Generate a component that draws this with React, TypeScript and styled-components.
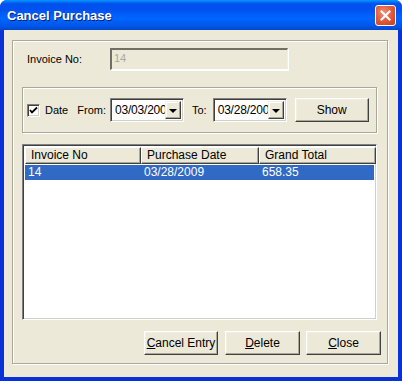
import React from "react";
import styled, { createGlobalStyle } from "styled-components";

const Global = createGlobalStyle`
  html, body { margin: 0; padding: 0; background: #fff; }
  body { font-family: "Liberation Sans", Arial, sans-serif; font-size: 11px; color: #000; }
`;

const Window = styled.div`
  width: 402px;
  height: 381px;
  display: flex;
  flex-direction: column;
  background: #0831d9;
  border-radius: 7px 7px 0 0;
  overflow: hidden;
  box-sizing: border-box;
`;

const TitleBar = styled.div`
  height: 30px;
  flex: none;
  display: flex;
  align-items: center;
  justify-content: space-between;
  padding: 0 6px 0 7px;
  background: linear-gradient(180deg, #0997ff 0%, #0053ee 12%, #0050ee 30%, #06f 60%, #0055e8 88%, #0046c8 100%);
`;

const Title = styled.span`
  color: #fff;
  font-family: "Liberation Sans", Arial, sans-serif;
  font-weight: bold;
  font-size: 13px;
  text-shadow: 1px 1px 0 #0a1e80;
`;

const CloseBtn = styled.div`
  width: 21px;
  height: 21px;
  box-sizing: border-box;
  border: 1px solid #fff;
  border-radius: 3px;
  background: radial-gradient(circle at 40% 35%, #f0907a 0%, #e25a3a 50%, #c3401f 100%);
  display: flex;
  align-items: center;
  justify-content: center;
`;

const Client = styled.div`
  flex: 1;
  margin: 0 4px 4px 4px;
  background: #ece9d8;
  display: flex;
  flex-direction: column;
  padding: 10px 10px 13px 8px;
`;

const Frame = styled.div`
  flex: 1;
  border: 1px solid #aca899;
  box-shadow: inset 1px 1px 0 #fff, 1px 1px 0 #fff;
  display: flex;
  flex-direction: column;
  padding: 7px 10px 0 9px;
`;

const InvoiceRow = styled.div`
  display: flex;
  align-items: center;
  height: 22px;
`;

const Label = styled.span<{ $w?: number; $ml?: number }>`
  width: ${(p) => (p.$w ? `${p.$w}px` : "auto")};
  margin-left: ${(p) => p.$ml ?? 0}px;
  white-space: nowrap;
  font-size: 11px;
`;

const DisabledInput = styled.div`
  width: 178px;
  height: 22px;
  box-sizing: border-box;
  border-top: 2px solid #716f64;
  border-left: 2px solid #716f64;
  border-right: 1px solid #f1efe2;
  border-bottom: 1px solid #fff;
  box-shadow: 1px 1px 0 #fff;
  color: #aca899;
  font-size: 11px;
  padding: 2px 0 0 2px;
`;

const DateGroup = styled.div`
  margin-top: 17px;
  height: 46px;
  box-sizing: border-box;
  border: 1px solid #aca899;
  box-shadow: inset 1px 1px 0 #fff, 1px 1px 0 #fff;
  display: flex;
  align-items: center;
  padding: 0 0 0 4px;
`;

const Check = styled.div`
  width: 13px;
  height: 13px;
  box-sizing: border-box;
  background: #fff;
  border-top: 1px solid #808080;
  border-left: 1px solid #808080;
  border-right: 1px solid #fff;
  border-bottom: 1px solid #fff;
  box-shadow: inset 1px 1px 0 #404040, inset -1px -1px 0 #d4d0c8;
  display: flex;
  align-items: center;
  justify-content: center;
`;

const Picker = styled.div<{ $ml: number }>`
  margin-left: ${(p) => p.$ml}px;
  width: 74px;
  height: 24px;
  box-sizing: border-box;
  background: #fff;
  border-top: 1px solid #808080;
  border-left: 1px solid #808080;
  border-right: 1px solid #fff;
  border-bottom: 1px solid #fff;
  box-shadow: inset 1px 1px 0 #404040, inset -1px -1px 0 #d4d0c8;
  display: flex;
  align-items: stretch;
  padding: 2px 2px 2px 2px;
`;

const PickerText = styled.span`
  flex: 1;
  overflow: hidden;
  white-space: nowrap;
  font-size: 12px;
  line-height: 18px;
  padding-left: 2px;
  letter-spacing: -0.2px;
`;

const DropBtn = styled.div`
  width: 16px;
  flex: none;
  background: #ece9d8;
  box-sizing: border-box;
  border-top: 1px solid #f1efe2;
  border-left: 1px solid #f1efe2;
  border-right: 1px solid #404040;
  border-bottom: 1px solid #404040;
  box-shadow: inset -1px -1px 0 #aca899, inset 1px 1px 0 #fff;
  display: flex;
  align-items: center;
  justify-content: center;
`;

const Arrow = styled.div`
  width: 0;
  height: 0;
  border-left: 4px solid transparent;
  border-right: 4px solid transparent;
  border-top: 4px solid #000;
  margin-top: 1px;
`;

const Btn = styled.button<{ $w: number; $ml?: number }>`
  width: ${(p) => p.$w}px;
  height: 24px;
  margin-left: ${(p) => p.$ml ?? 0}px;
  padding: 0;
  box-sizing: border-box;
  background: #ece9d8;
  border-top: 1px solid #fff;
  border-left: 1px solid #fff;
  border-right: 1px solid #404040;
  border-bottom: 1px solid #404040;
  box-shadow: inset -1px -1px 0 #aca899, inset 1px 1px 0 #f1efe2;
  font-family: "Liberation Sans", Arial, sans-serif;
  font-size: 12px;
  color: #000;
  u { text-decoration: underline; }
`;

const ListView = styled.div`
  margin-top: 11px;
  height: 176px;
  box-sizing: border-box;
  background: #fff;
  border-top: 1px solid #808080;
  border-left: 1px solid #808080;
  border-right: 1px solid #fff;
  border-bottom: 1px solid #fff;
  box-shadow: inset 1px 1px 0 #404040, inset -1px -1px 0 #d4d0c8;
  padding: 2px 2px 2px 2px;
  display: flex;
  flex-direction: column;
`;

const Header = styled.div`
  display: grid;
  grid-template-columns: 116px 118px 117px;
  height: 17px;
`;

const HeaderCell = styled.div`
  box-sizing: border-box;
  background: #ece9d8;
  border-top: 1px solid #fff;
  border-left: 1px solid #fff;
  border-right: 1px solid #404040;
  border-bottom: 1px solid #404040;
  box-shadow: inset -1px -1px 0 #aca899;
  font-size: 12px;
  line-height: 15px;
  padding-left: 5px;
  white-space: nowrap;
`;

const Row = styled.div<{ $selected?: boolean }>`
  display: grid;
  grid-template-columns: 116px 118px 117px;
  height: 15px;
  margin-top: 1px;
  background: ${(p) => (p.$selected ? "#316ac5" : "transparent")};
  color: ${(p) => (p.$selected ? "#fff" : "#000")};
`;

const Cell = styled.div`
  font-size: 12px;
  line-height: 15px;
  padding-left: 3px;
  white-space: nowrap;
`;

const Footer = styled.div`
  display: flex;
  justify-content: flex-end;
  margin-top: 11px;
  margin-right: -4px;
`;

export default function App() {
  return (
    <>
      <Global />
      <Window>
        <TitleBar>
          <Title>Cancel Purchase</Title>
          <CloseBtn>
            <svg width="11" height="11" viewBox="0 0 11 11">
              <path d="M1.5 1.5 L9.5 9.5 M9.5 1.5 L1.5 9.5" stroke="#fff" strokeWidth="2.2" strokeLinecap="square" />
            </svg>
          </CloseBtn>
        </TitleBar>
        <Client>
          <Frame>
            <InvoiceRow>
              <Label $w={83} $ml={5}>Invoice No:</Label>
              <DisabledInput>14</DisabledInput>
            </InvoiceRow>
            <DateGroup>
              <Check>
                <svg width="9" height="9" viewBox="0 0 9 9">
                  <path d="M1 4 L3 6.5 L8 1.5" stroke="#000" strokeWidth="1.8" fill="none" />
                </svg>
              </Check>
              <Label $ml={5}>Date</Label>
              <Label $ml={9}>From:</Label>
              <Picker $ml={4}>
                <PickerText>03/03/200</PickerText>
                <DropBtn><Arrow /></DropBtn>
              </Picker>
              <Label $ml={8}>To:</Label>
              <Picker $ml={6}>
                <PickerText>03/28/200</PickerText>
                <DropBtn><Arrow /></DropBtn>
              </Picker>
              <Btn $w={74} $ml={8}>Show</Btn>
            </DateGroup>
            <ListView>
              <Header>
                <HeaderCell>Invoice No</HeaderCell>
                <HeaderCell>Purchase Date</HeaderCell>
                <HeaderCell>Grand Total</HeaderCell>
              </Header>
              <Row $selected>
                <Cell>14</Cell>
                <Cell>03/28/2009</Cell>
                <Cell>658.35</Cell>
              </Row>
            </ListView>
            <Footer>
              <Btn $w={74}><u>C</u>ancel Entry</Btn>
              <Btn $w={75} $ml={7}><u>D</u>elete</Btn>
              <Btn $w={75} $ml={6}><u>C</u>lose</Btn>
            </Footer>
          </Frame>
        </Client>
      </Window>
    </>
  );
}
